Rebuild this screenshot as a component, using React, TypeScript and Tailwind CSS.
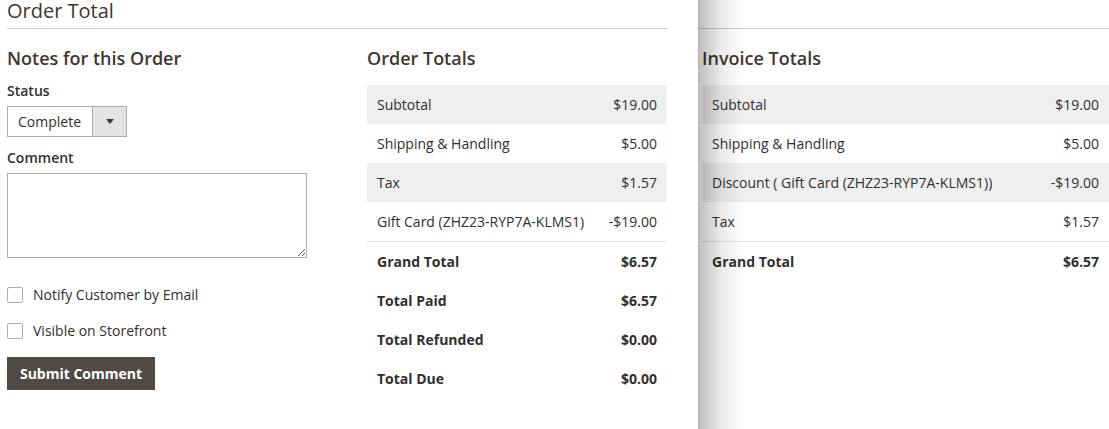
import React from 'react'

type Row = { label: string; value: string; shade?: boolean; bold?: boolean; rule?: boolean }

const orderRows: Row[] = [
  { label: 'Subtotal', value: '$19.00', shade: true },
  { label: 'Shipping & Handling', value: '$5.00' },
  { label: 'Tax', value: '$1.57', shade: true },
  { label: 'Gift Card (ZHZ23-RYP7A-KLMS1)', value: '-$19.00', rule: true },
  { label: 'Grand Total', value: '$6.57', bold: true },
  { label: 'Total Paid', value: '$6.57', bold: true },
  { label: 'Total Refunded', value: '$0.00', bold: true },
  { label: 'Total Due', value: '$0.00', bold: true },
]

const invoiceRows: Row[] = [
  { label: 'Subtotal', value: '$19.00', shade: true },
  { label: 'Shipping & Handling', value: '$5.00' },
  { label: 'Discount ( Gift Card (ZHZ23-RYP7A-KLMS1))', value: '-$19.00', shade: true },
  { label: 'Tax', value: '$1.57', rule: true },
  { label: 'Grand Total', value: '$6.57', bold: true },
]

function TotalsTable({ rows }: { rows: Row[] }) {
  return (
    <div className="mt-[16px] flex flex-col">
      {rows.map((r) => (
        <div
          key={r.label}
          className={`flex h-[39px] items-center justify-between px-[10px] ${r.shade ? 'bg-[#efefef]' : ''} ${r.rule ? 'box-content border-b border-[#e3e3e3]' : ''} ${r.bold ? 'font-bold' : ''}`}
        >
          <span>{r.label}</span>
          <span>{r.value}</span>
        </div>
      ))}
    </div>
  )
}

function Heading({ children }: { children: React.ReactNode }) {
  return <h3 className="mt-[18px] text-[18px] leading-[22px] font-semibold text-[#41362f]">{children}</h3>
}

function Check({ label }: { label: string }) {
  return (
    <label className="flex h-4 items-center gap-[10px]">
      <input type="checkbox" className="h-4 w-4 appearance-none rounded-[2px] border border-[#adadad] bg-white" />
      <span>{label}</span>
    </label>
  )
}

export default function App() {
  return (
    <div
      className="flex h-[429px] w-[1109px] overflow-hidden bg-white text-[14px] leading-[20px] text-[#303030]"
      style={{ fontFamily: '"Open Sans", "Liberation Sans", sans-serif' }}
    >
      {/* order view */}
      <div className="w-[698px] shrink-0 pl-[7px]">
        <div className="h-[29px] w-[660px] border-b border-[#cccccc] pt-px">
          <h2 className="text-[20px] leading-[20px] text-[#41362f]">Order Total</h2>
        </div>

        <div className="flex gap-[60px]">
          <div className="flex w-[300px] flex-col">
            <Heading>Notes for this Order</Heading>
            <div className="mt-[12px] font-semibold">Status</div>
            <div className="mt-[5px] flex h-[31px] w-[120px] border border-[#adadad]">
              <div className="flex flex-1 items-center pl-[10px]">Complete</div>
              <div className="flex w-[34px] items-center justify-center border-l border-[#adadad] bg-[#e3e3e3]">
                <svg width="8" height="5" viewBox="0 0 8 5">
                  <path d="M0 0h8L4 5z" fill="#41362f" />
                </svg>
              </div>
            </div>
            <div className="mt-[11px] font-semibold">Comment</div>
            <textarea className="mt-[5px] h-[85px] w-[300px] border border-[#adadad] bg-white" />
            <div className="mt-[29px]">
              <Check label="Notify Customer by Email" />
            </div>
            <div className="mt-[20px]">
              <Check label="Visible on Storefront" />
            </div>
            <button className="mt-[18px] h-[33px] w-[148px] bg-[#514943] font-bold text-white">Submit Comment</button>
          </div>

          <div className="flex w-[300px] flex-col">
            <Heading>Order Totals</Heading>
            <TotalsTable rows={orderRows} />
          </div>
        </div>
      </div>

      {/* invoice view */}
      <div className="relative flex-1">
        <div className="h-[29px] border-b border-[#cccccc]" />
        <div className="flex flex-col pl-[4px]">
          <Heading>Invoice Totals</Heading>
          <TotalsTable rows={invoiceRows} />
        </div>
        <div className="pointer-events-none absolute inset-y-0 left-0 w-[46px] border-l border-[#b5b5b5] bg-linear-to-r from-black/25 via-black/8 to-transparent" />
      </div>
    </div>
  )
}
